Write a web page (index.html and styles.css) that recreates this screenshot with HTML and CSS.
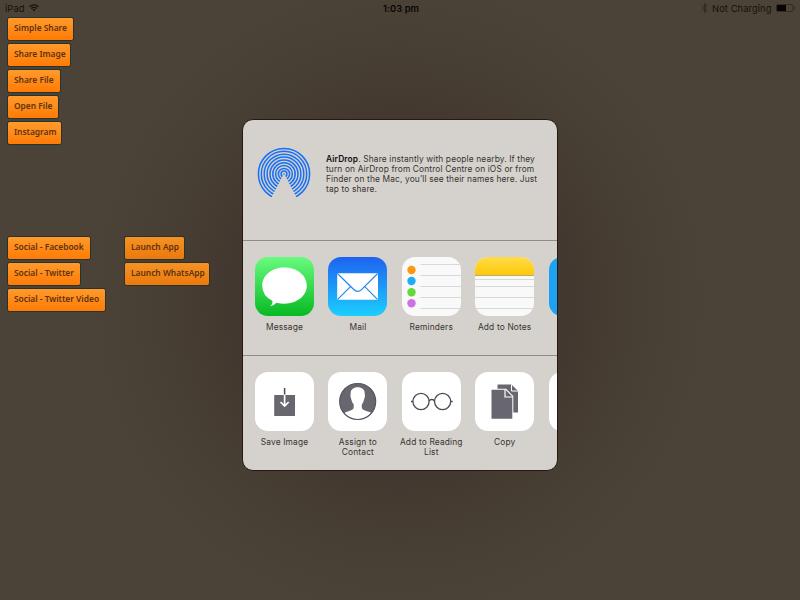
FILE: index.html
```html
<!DOCTYPE html>
<html lang="en">
<head>
<meta charset="utf-8">
<title>Share</title>
<link rel="stylesheet" href="styles.css">
</head>
<body>
<header class="status">
  <div class="status-left"><span>iPad</span>
    <svg width="10" height="8" viewBox="0 0 10 8" fill="none" stroke="#15110d" stroke-width="1.25"><path d="M.5 2.7Q5-1 9.5 2.7M2.2 4.5Q5 2.2 7.8 4.5"/><path d="M3.4 5.6Q5 4.4 6.6 5.6L5 7.4Z" fill="#15110d" stroke="none"/></svg>
  </div>
  <div class="clock">1:03 pm</div>
  <div class="status-right">
    <svg width="7" height="10" viewBox="0 0 7 10" fill="none" stroke="#29231d" stroke-width=".8"><path d="M.8 2.6L6 7.2 3.5 9.5V.5L6 2.8.8 7.4"/></svg>
    <span class="charge">Not Charging</span>
    <svg width="20" height="8" viewBox="0 0 20 8"><rect x=".5" y=".5" width="16.5" height="7" rx="1" fill="none" stroke="#28221c" stroke-width=".7"/><rect x="1" y="1" width="9" height="6" fill="#080605"/><path d="M18 2.5q1.3 1.5 0 3z" fill="#15110d"/></svg>
  </div>
</header>
<main class="stage">
  <nav class="buttons">
    <div class="group top">
      <button class="w65">Simple Share</button>
      <button class="w62">Share Image</button>
      <button class="w52">Share File</button>
      <button class="w50">Open File</button>
      <button class="w53">Instagram</button>
    </div>
    <div class="columns">
      <div class="group social">
        <button class="w82">Social - Facebook</button>
        <button class="w72">Social - Twitter</button>
        <button class="w97">Social - Twitter Video</button>
      </div>
      <div class="group launch">
        <button class="w59">Launch App</button>
        <button class="w84">Launch WhatsApp</button>
      </div>
    </div>
  </nav>
  <section class="sheet">
    <div class="airdrop">
      <svg class="airdrop-icon" width="54" height="54" viewBox="0 0 54 54">
        <defs><clipPath id="fan"><path d="M0 0H54V54H41.400L27 26.500 12.600 54H0Z"/></clipPath></defs>
        <g clip-path="url(#fan)" fill="none" stroke="#1770f5" stroke-width="1.500">
          <circle cx="27" cy="27" r="25.600"/><circle cx="27" cy="27" r="22.700"/><circle cx="27" cy="27" r="19.800"/><circle cx="27" cy="27" r="16.900"/><circle cx="27" cy="27" r="14"/><circle cx="27" cy="27" r="11.200"/><circle cx="27" cy="27" r="8.400"/><circle cx="27" cy="27" r="5.600"/><circle cx="27" cy="27" r="2.900"/>
        </g>
        <circle cx="27" cy="27" r=".8" fill="#1770f5"/>
      </svg>
      <p><b>AirDrop</b>. Share instantly with people nearby. If they<br>turn on AirDrop from Control Centre on iOS or from<br>Finder on the Mac, you’ll see their names here. Just<br>tap to share.</p>
    </div>
    <div class="row apps">
      <div class="item"><div class="tile message">
        <svg width="59" height="59" viewBox="0 0 59 59"><path d="M29.500 10.500C42 10.500 51.800 18.300 51.800 28.600S42 46.700 29.500 46.700Q25 46.700 21.500 45.700Q18.500 48.800 15.300 49.200Q17.800 46.500 17.600 44Q7.200 39 7.200 28.600C7.200 18.300 17 10.500 29.500 10.500Z" fill="#fff"/></svg></div><span>Message</span></div>
      <div class="item"><div class="tile mail">
        <svg width="59" height="59" viewBox="0 0 59 59"><rect x="9.200" y="16.200" width="40.800" height="26.600" rx="1" fill="#fff"/><g fill="none" stroke="#2488ec" stroke-width="1.200"><path d="M9.700 16.700L25.500 32.300Q29.600 36.500 33.700 32.300L49.500 16.700M9.700 42.300L22.200 29.800M49.500 42.300L37 29.800"/></g></svg></div><span>Mail</span></div>
      <div class="item"><div class="tile reminders">
        <svg width="59" height="59" viewBox="0 0 59 59"><path d="M18.500 7.500H59M18.500 18.500H59M18.500 29.500H59M18.500 40.500H59M18.500 51.500H59" stroke="#d9d9dc"/><circle cx="9.500" cy="13" r="4.200" fill="#ff9510"/><circle cx="9.500" cy="24" r="4.200" fill="#1badf8"/><circle cx="9.500" cy="35.200" r="4.200" fill="#63da38"/><circle cx="9.500" cy="46.200" r="4.200" fill="#cc73e1"/></svg></div><span>Reminders</span></div>
      <div class="item"><div class="tile notes">
        <svg width="59" height="59" viewBox="0 0 59 59"><defs><linearGradient id="yel" x2="0" y2="1"><stop stop-color="#ffdb4b"/><stop offset="1" stop-color="#fdc907"/></linearGradient></defs><path d="M0 0H59V18H0Z" fill="url(#yel)"/><path d="M0 18.500H59" stroke="#bbaa78"/><path d="M0 22.500H59M0 29.500H59M0 40.500H59M0 51.500H59" stroke="#d8d8da"/></svg></div><span>Add to Notes</span></div>
      <div class="item"><div class="tile twitter"></div></div>
    </div>
    <div class="row actions">
      <div class="item"><div class="tile">
        <svg width="59" height="59" viewBox="0 0 59 59"><path d="M19.200 23H40V44H19.200Z" fill="#686770"/><path d="M29.600 16V23" stroke="#4b4a54" stroke-width="1.500"/><path d="M29.600 22.500V33.500M25.500 30L29.600 34.100 33.700 30" fill="none" stroke="#fff" stroke-width="1.700"/></svg></div><span>Save Image</span></div>
      <div class="item"><div class="tile">
        <svg width="59" height="59" viewBox="0 0 59 59"><defs><clipPath id="face"><circle cx="29.700" cy="29.500" r="18"/></clipPath></defs><circle cx="29.700" cy="29.500" r="18" fill="#686770"/><path clip-path="url(#face)" d="M29.700 15.300C34.500 15.300 37.200 18 36.700 22.500Q37.500 23.800 36.200 27Q35.400 31 33.800 32.500V36Q34.500 38 39 39.200Q44.500 40.500 46 44V50H14V44Q15.500 40.500 20.500 39.200Q25 38 25.700 36V32.500Q24 31 23.200 27Q22 23.800 22.700 22.500C22.200 18 25 15.300 29.700 15.300Z" fill="#fff"/><circle cx="29.700" cy="29.500" r="18" fill="none" stroke="#555460" stroke-width="1.200"/></svg></div><span>Assign to<br>Contact</span></div>
      <div class="item"><div class="tile">
        <svg width="59" height="59" viewBox="0 0 59 59" fill="none" stroke="#4b4a53" stroke-width="1.300"><circle cx="19" cy="29.500" r="8.100"/><circle cx="40.600" cy="29.500" r="8.100"/><path d="M27.100 29.300Q27.500 27.500 29.800 27.500T32.500 29.300M9 29.500H11M48.700 29.500H50.700"/></svg></div><span class="wide">Add to Reading<br>List</span></div>
      <div class="item"><div class="tile">
        <svg width="59" height="59" viewBox="0 0 59 59"><path d="M22.500 12.500H36.500L43 19V40.500H22.500Z" fill="#686770"/><path d="M36.500 12.500V19H43" fill="none" stroke="#fff" stroke-width="1"/><path d="M16 16.800H31.200L38.300 24V47.500H16Z" fill="#fff"/><path d="M16.500 17.800H30.500L37.300 24.600V46.700H16.500Z" fill="#686770"/><path d="M30 17.500V25H37.500" fill="none" stroke="#fff" stroke-width="1.200"/></svg></div><span>Copy</span></div>
      <div class="item"><div class="tile"></div></div>
    </div>
  </section>
</main>
</body>
</html>
```
FILE: styles.css
```css
* { box-sizing: border-box; }
body { margin: 0; width: 800px; height: 600px; overflow: hidden; font-family: Inter, "Liberation Sans", sans-serif; background: radial-gradient(ellipse 310px 320px at 400px 300px, #42372f 0%, #43382f 55%, #484035 82%, #4b4337 100%); }
.status { height: 17px; display: grid; grid-template-columns: 1fr auto 1fr; align-items: center; padding: 0 4px 1px 5px; font-size: 9.4px; letter-spacing: .06px; color: #15110d; }
.status-left, .status-right { display: flex; align-items: center; gap: 4.5px; }
.status-right { justify-content: flex-end; }
.clock { padding-left: 1px; font-weight: 600; color: #080504; font-size: 9.3px; }
.stage { display: grid; grid-template-columns: 235px 315px; padding-left: 7px; }
.group { display: flex; flex-direction: column; align-items: flex-start; gap: 2px; }
.top { height: 219px; }
.columns { display: grid; grid-template-columns: 117px 1fr; }
button { height: 24px; padding: 0 0 2px 6px; border: 1px solid #26332f; border-radius: 2.500px; background: linear-gradient(#ff9a2b, #ff7b05); color: #5c3310; font: 600 8.4px/12px "Noto Sans", sans-serif; text-align: left; white-space: nowrap; }
.launch button { background: linear-gradient(#f69223, #eb790d); }
.w65 { width: 67px; } .w62 { width: 64px; } .w52 { width: 54px; } .w50 { width: 52px; } .w53 { width: 55px; }
.w82 { width: 84px; } .w72 { width: 74px; } .w97 { width: 99px; } .w59 { width: 61px; } .w84 { width: 86px; }
.sheet { margin-top: 102px; width: 316px; height: 352px; border: 1px solid #271911; border-radius: 11px; background: #d5d1cd; overflow: hidden; color: #38352f; }
.airdrop { height: 120px; padding: 26.500px 0 0 14px; display: flex; gap: 15px; }
.airdrop p { margin: 7.500px 0 0; font-size: 8.4px; line-height: 10.1px; letter-spacing: .13px; white-space: nowrap; }
.airdrop b { font-weight: 600; color: #100f0e; }
.row { display: flex; gap: 14.400px; padding: 16px 0 0 12px; border-top: 1px solid #8f8b87; height: 115px; }
.actions { height: 116px; }
.item { flex: 0 0 59px; min-width: 0; width: 59px; display: flex; flex-direction: column; align-items: center; }
.item span { margin-top: 6px; font-size: 8.4px; line-height: 10px; letter-spacing: .15px; text-align: center; white-space: nowrap; }
.tile { flex: none; width: 59px; height: 59px; border-radius: 13px; background: #fff; overflow: hidden; }
.tile svg { display: block; }
.message { background: linear-gradient(#69fb7e, #07b922); }
.mail { background: linear-gradient(#1e62f0, #1bcffd); }
.reminders, .notes { background: #f9f9f9; }
.twitter { background: #1da1f2; }
```
